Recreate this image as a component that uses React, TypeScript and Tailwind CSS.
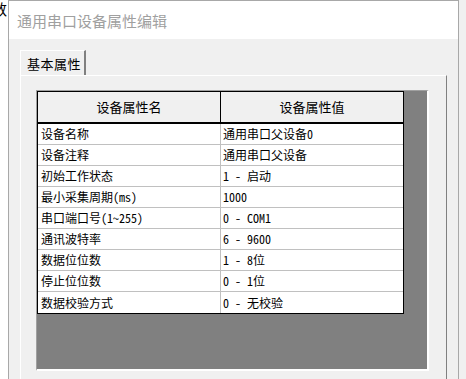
import React from "react";

const rows: [string, string][] = [
  ["设备名称", "通用串口父设备0"],
  ["设备注释", "通用串口父设备"],
  ["初始工作状态", "1 - 启动"],
  ["最小采集周期(ms)", "1000"],
  ["串口端口号(1~255)", "0 - COM1"],
  ["通讯波特率", "6 - 9600"],
  ["数据位位数", "1 - 8位"],
  ["停止位位数", "0 - 1位"],
  ["数据校验方式", "0 - 无校验"],
];

const cellFont = {
  fontFamily:
    "'Noto Sans Mono CJK SC', 'Liberation Mono', 'Noto Sans CJK SC', monospace",
};

export default function App() {
  return (
    <div
      className="w-[466px] h-[379px] bg-white flex overflow-hidden"
      style={{ fontFamily: "'Noto Sans CJK SC', 'Noto Sans', sans-serif" }}
    >
      {/* underlying window fragment */}
      <div className="w-[8px] shrink-0 overflow-hidden relative">
        <span className="absolute left-[-8px] top-[-1px] text-[15px] leading-[20px] text-black">
          数
        </span>
      </div>

      {/* dialog window */}
      <div className="w-[451px] shrink-0 flex flex-col border-l border-r border-t border-[#a8a8a8]">
        <div className="h-[38px] shrink-0 bg-white flex items-center pl-[8px] text-[15px] text-[#a0a0a0] leading-none">
          通用串口设备属性编辑
        </div>
        <div className="flex-1 bg-[#f0f0f0] pl-[11px] pt-[11px] flex flex-col">
          {/* tab */}
          <div className="flex">
            <div className="w-[66px] h-[25px] border-l border-t border-white border-r-[#808080] border-r-2 bg-[#f0f0f0] flex items-center pl-[6px] text-[13px] tracking-[0.5px] text-black leading-none">
              基本属性
            </div>
          </div>
          {/* panel */}
          <div className="w-[427px] flex-1 border-t border-l border-white border-r border-r-[#808080] pl-[15px] pt-[14px]">
            <div className="w-[393px] h-[281px] bg-[#808080] border-l border-t border-[#a0a0a0] border-r-2 border-b-2 border-r-white border-b-white">
              <div className="w-[367px] bg-white border border-black" style={cellFont}>
                <div className="flex h-[32px] bg-[#f0f0f0] border-b-2 border-black text-[13px] text-black">
                  <div className="w-[183px] border-r border-black flex items-center justify-center">
                    设备属性名
                  </div>
                  <div className="flex-1 flex items-center justify-center">
                    设备属性值
                  </div>
                </div>
                {rows.map(([k, v], i) => (
                  <div
                    key={k}
                    className={`flex h-[21px] text-[12px] text-black leading-none ${
                      i < rows.length - 1 ? "border-b border-[#c0c0c0]" : ""
                    }`}
                  >
                    <div className="w-[183px] border-r border-[#c0c0c0] flex items-center pl-[3px] whitespace-nowrap">
                      {k}
                    </div>
                    <div className="flex-1 flex items-center pl-[2px] whitespace-pre">
                      {v}
                    </div>
                  </div>
                ))}
              </div>
            </div>
          </div>
        </div>
      </div>
      <div className="flex-1 bg-[#f0f0f0]" />
    </div>
  );
}
